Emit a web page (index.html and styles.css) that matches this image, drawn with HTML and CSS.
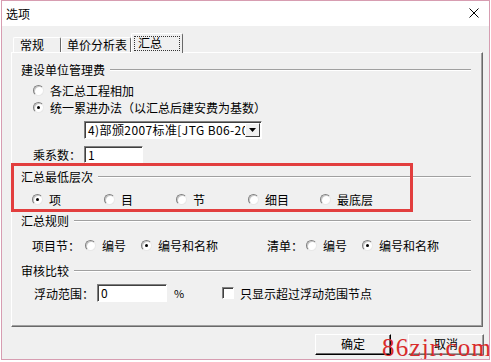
FILE: index.html
```html
<!DOCTYPE html>
<html lang="zh-CN">
<head>
  <meta charset="UTF-8" />
  <title>选项</title>
  <link rel="stylesheet" href="styles.css">
</head>
<body>
  <div class="window">
    <div class="titlebar">
      <span class="title">选项</span>
      <svg class="close" viewBox="0 0 10 10"><path d="M0.5 0.5 9.5 9.5 M9.5 0.5 0.5 9.5"/></svg>
    </div>

    <div class="tabs">
      <div class="tab tab-1">常规</div>
      <div class="tab tab-2">单价分析表</div>
      <div class="tab active"><span class="focus">汇总</span></div>
    </div>

    <div class="panel">
      <div class="grp-head"><span>建设单位管理费</span></div>
      <div class="row opt-1"><span class="radio"></span>各汇总工程相加</div>
      <div class="row opt-2"><span class="radio on"></span>统一累进办法（以汇总后建安费为基数）</div>
      <div class="select">
        <span class="select-text">4)部颁2007标准[JTG B06-2007]</span>
        <span class="select-btn"><svg viewBox="0 0 7 4"><path d="M0 0h7L3.5 4z"/></svg></span>
      </div>
      <div class="row coef">
        <span class="label">乘系数：</span>
        <span class="input input-coef">1</span>
      </div>

      <div class="grp-head grp-level"><span>汇总最低层次</span></div>
      <div class="row levels">
        <span class="level"><span class="radio on"></span>项</span>
        <span class="level"><span class="radio"></span>目</span>
        <span class="level"><span class="radio"></span>节</span>
        <span class="level"><span class="radio"></span>细目</span>
        <span class="level"><span class="radio"></span>最底层</span>
      </div>

      <div class="grp-head grp-rule"><span>汇总规则</span></div>
      <div class="row rules">
        <span class="label">项目节：</span>
        <span class="choice"><span class="radio"></span>编号</span>
        <span class="choice"><span class="radio on"></span>编号和名称</span>
        <span class="label label-list">清单：</span>
        <span class="choice"><span class="radio"></span>编号</span>
        <span class="choice"><span class="radio on"></span>编号和名称</span>
      </div>

      <div class="grp-head grp-audit"><span>审核比较</span></div>
      <div class="row audit">
        <span class="label">浮动范围：</span>
        <span class="input input-range">0</span>
        <span class="pct">%</span>
        <span class="check"></span>
        <span>只显示超过浮动范围节点</span>
      </div>

      <div class="highlight"></div>
    </div>

    <div class="buttons">
      <div class="btn default">确定</div>
      <div class="btn">取消</div>
    </div>

    <div class="watermark">86zjr.com</div>
  </div>
</body>
</html>
```

FILE: styles.css
```css
html, body {
  margin: 0;
  padding: 0;
}
body {
  width: 491px;
  height: 362px;
  overflow: hidden;
  background: #fff;
  font-family: "Noto Sans CJK SC", "Liberation Sans", sans-serif;
  font-size: 12px;
  color: #000;
}
.window {
  position: relative;
  box-sizing: border-box;
  margin-left: 1px;
  width: 489px;
  height: 360px;
  border: 1px solid #d79db1;
  background: #f0f0f0;
  overflow: hidden;
}
.titlebar {
  display: flex;
  align-items: center;
  justify-content: space-between;
  height: 25px;
  padding: 0 10px 0 4px;
  background: #fff;
}
.title {
  line-height: 14px;
  margin-top: 1px;
}
.close {
  width: 10px;
  height: 10px;
  margin-top: -1px;
  stroke: #000;
  stroke-width: 1;
  fill: none;
}

/* tabs */
.tabs {
  display: flex;
  align-items: flex-end;
  height: 19px;
  margin-top: 7px;
  padding-left: 11px;
}
.tab {
  box-sizing: border-box;
  height: 15px;
  line-height: 14px;
  padding-left: 6px;
  border-top: 1px solid #fff;
  border-left: 1px solid #fff;
  border-right: 1px solid #696969;
  border-radius: 2px 2px 0 0;
}
.tab-1 { width: 48px; }
.tab-2 { width: 70px; padding-left: 5px; }
.tab.active {
  position: relative;
  z-index: 2;
  width: 52px;
  height: 20px;
  margin-bottom: -1px;
  padding: 2px 2px 0 2px;
  background: #f0f0f0;
}
.focus {
  display: block;
  height: 15px;
  line-height: 14px;
  padding-left: 4px;
  outline: 1px dotted #333;
  outline-offset: -1px;
}

/* panel */
.panel {
  position: relative;
  box-sizing: border-box;
  width: 472px;
  height: 275px;
  margin-left: 9px;
  padding-top: 8px;
  border-top: 1px solid #fff;
  border-left: 1px solid #fff;
  border-right: 1px solid #696969;
  border-bottom: 1px solid #696969;
  box-shadow: inset -1px -1px 0 #a0a0a0;
}
.grp-head {
  display: flex;
  align-items: center;
  height: 16px;
  padding-left: 9px;
}
.grp-head::after {
  content: '';
  flex: 1;
  margin: 2px 11px 0 5px;
  border-top: 1px solid #a0a0a0;
  border-bottom: 1px solid #fff;
}
.row {
  display: flex;
  align-items: center;
  height: 16px;
  white-space: nowrap;
}
.radio {
  box-sizing: border-box;
  position: relative;
  flex-shrink: 0;
  width: 11px;
  height: 11px;
  margin-right: 6px;
  border-radius: 50%;
  border: 1px solid;
  border-color: #808080 #e8e8e8 #e8e8e8 #808080;
  background: #fff;
  box-shadow: inset 1px 1px 0 #c8c8c8;
}
.radio.on::after {
  content: '';
  position: absolute;
  left: 3px;
  top: 3px;
  width: 3px;
  height: 3px;
  border-radius: 50%;
  background: #000;
}
.opt-1 { margin-top: 5px; padding-left: 21px; }
.opt-2 { margin-top: 1px; padding-left: 21px; }

.select {
  display: flex;
  box-sizing: border-box;
  width: 178px;
  height: 18px;
  margin: 6px 0 0 72px;
  border: 1px solid;
  border-color: #808080 #fff #fff #808080;
  background: #fff;
  box-shadow: inset 1px 1px 0 #404040;
}
.select-text {
  flex: 1;
  overflow: hidden;
  white-space: nowrap;
  padding-left: 3px;
  line-height: 15px;
  letter-spacing: 0.4px;
}
.select-btn {
  box-sizing: border-box;
  display: flex;
  align-items: center;
  justify-content: center;
  width: 15px;
  height: 14px;
  margin: 1px 1px 0 0;
  background: #f0f0f0;
  border: 1px solid;
  border-color: #fff #404040 #404040 #fff;
}
.select-btn svg {
  width: 7px;
  height: 4px;
  fill: #000;
}

.label { flex-shrink: 0; }
.input {
  box-sizing: border-box;
  display: block;
  height: 18px;
  line-height: 15px;
  padding-left: 3px;
  border: 1px solid;
  border-color: #808080 #fff #fff #808080;
  background: #fff;
  box-shadow: inset 1px 1px 0 #404040;
}
.coef {
  height: 17px;
  margin-top: 7px;
  padding-left: 21px;
}
.coef .label { width: 51px; }
.input-coef { width: 59px; height: 17px; }

.grp-level { margin-top: 5px; }
.levels {
  margin-top: 7px;
  padding-left: 20px;
}
.level {
  display: flex;
  align-items: center;
  width: 72px;
}

.grp-rule { margin-top: 5px; }
.rules {
  margin-top: 9px;
  padding-left: 20px;
}
.rules .label { width: 53px; }
.choice {
  display: flex;
  align-items: center;
}
.choice + .choice { margin-left: 15px; }
.rules .label-list {
  width: 39px;
  margin-left: 49px;
}

.grp-audit { margin-top: 9px; }
.audit {
  height: 18px;
  margin-top: 6px;
  padding-left: 22px;
}
.audit .label { width: 63px; }
.input-range { width: 70px; }
.pct {
  width: 48px;
  margin-left: 7px;
  font-size: 11px;
}
.check {
  box-sizing: border-box;
  width: 12px;
  height: 12px;
  margin-right: 6px;
  border: 1px solid;
  border-color: #808080 #fff #fff #808080;
  background: #fff;
  box-shadow: inset 1px 1px 0 #404040;
}

/* red annotation box over the level group */
.highlight {
  position: absolute;
  left: -1px;
  top: 110px;
  box-sizing: border-box;
  width: 402px;
  height: 49px;
  border: 3px solid #e23e3e;
}

.buttons {
  display: flex;
  justify-content: flex-end;
  gap: 17px;
  margin-top: 7px;
  padding-right: 5px;
}
.btn {
  box-sizing: border-box;
  width: 76px;
  height: 21px;
  line-height: 18px;
  text-align: center;
  border: 1px solid;
  border-color: #fff #696969 #696969 #fff;
  box-shadow: inset -1px -1px 0 #a0a0a0;
}
.btn.default {
  border-color: #fff #000 #000 #fff;
  box-shadow: inset -1px -1px 0 #696969;
}

.watermark {
  position: absolute;
  left: 380px;
  top: 334px;
  font-family: "Liberation Serif", serif;
  font-size: 25px;
  line-height: 25px;
  letter-spacing: 1.2px;
  color: #d92b2b;
  white-space: nowrap;
}
```
